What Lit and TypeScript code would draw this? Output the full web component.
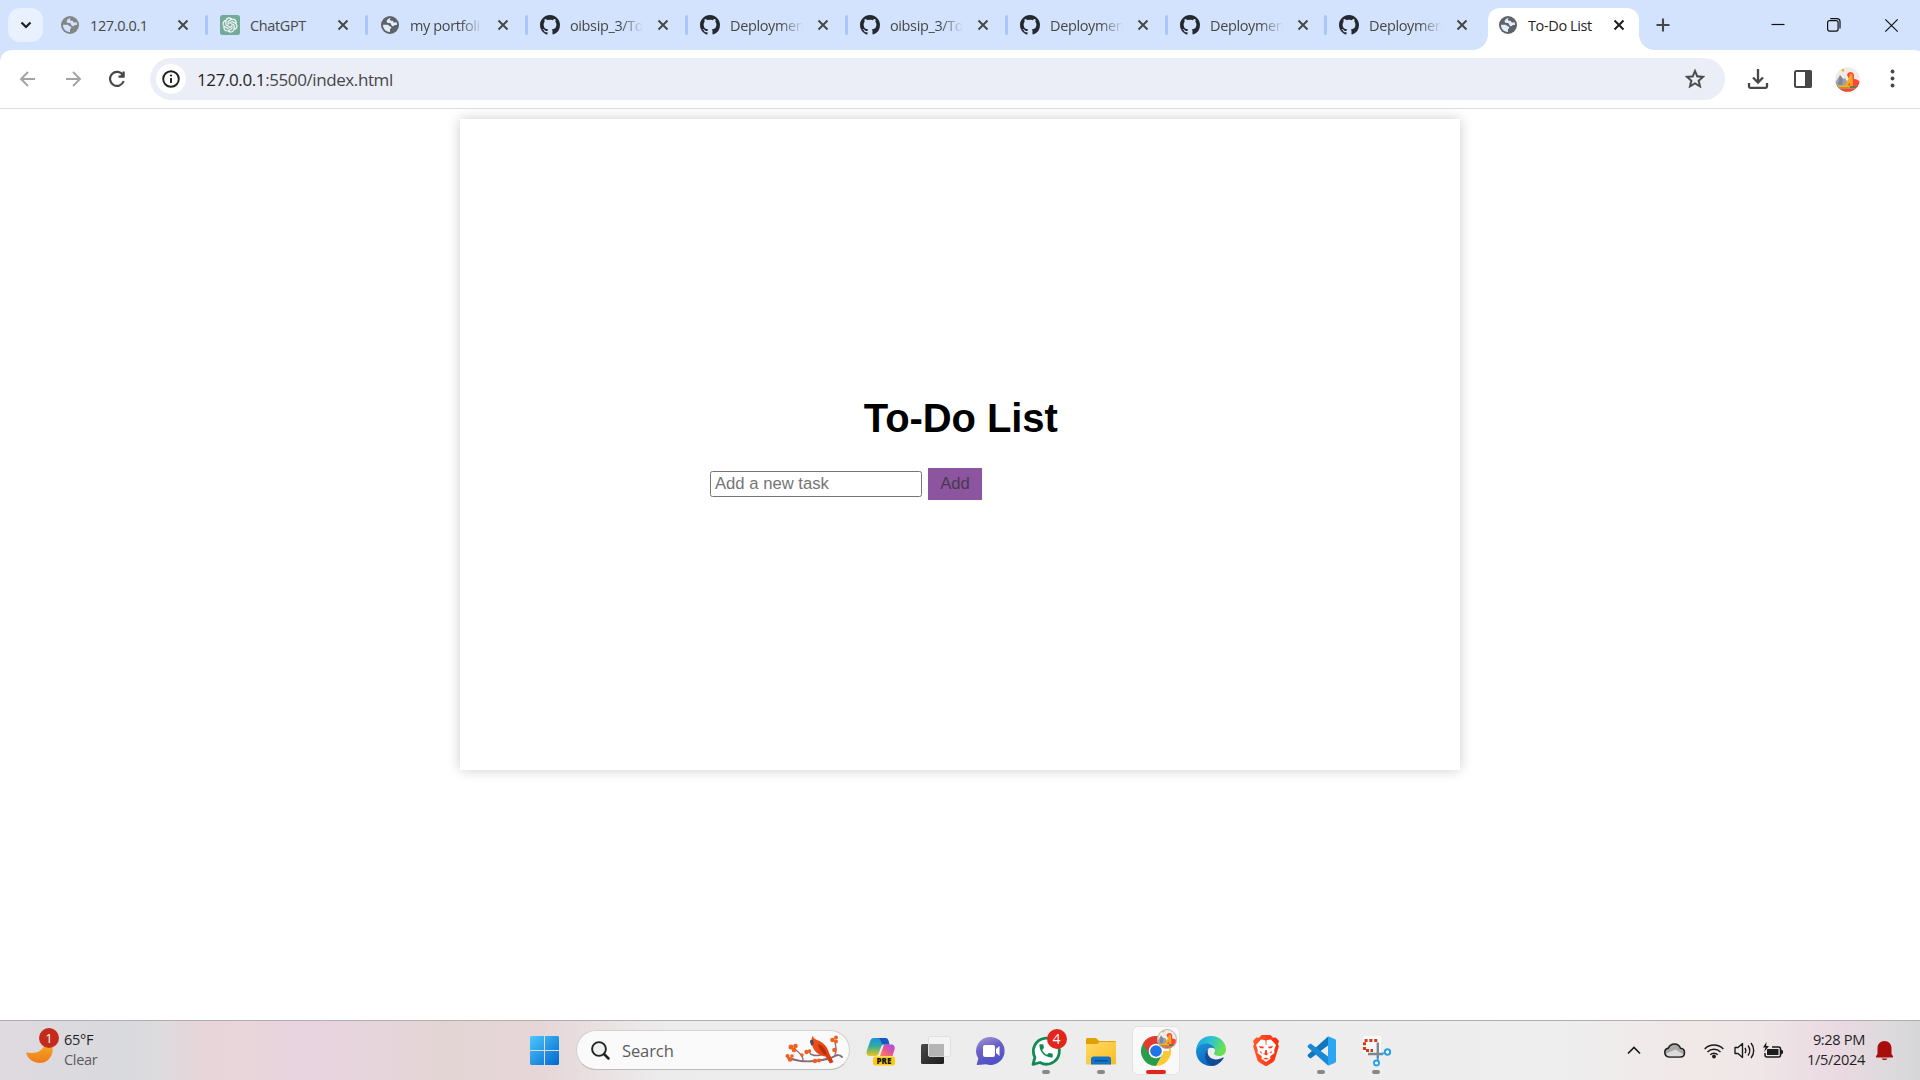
import { LitElement, html, svg, css } from "lit";
import { customElement } from "lit/decorators.js";
import { classMap } from "lit/directives/class-map.js";

type Fav = "globe" | "gpt" | "github";
interface Tab { title: string; icon: Fav; active?: boolean; dim?: boolean; narrow?: boolean }

const TABS: Tab[] = [
  { title: "127.0.0.1", icon: "globe", dim: true },
  { title: "ChatGPT", icon: "gpt" },
  { title: "my portfoli", icon: "globe" },
  { title: "oibsip_3/To", icon: "github" },
  { title: "Deploymen", icon: "github" },
  { title: "oibsip_3/To", icon: "github" },
  { title: "Deploymen", icon: "github" },
  { title: "Deploymen", icon: "github", narrow: true },
  { title: "Deploymen", icon: "github" },
  { title: "To-Do List", icon: "globe", active: true },
];

const GITHUB = "M8 0C3.58 0 0 3.58 0 8c0 3.54 2.29 6.53 5.47 7.59.4.07.55-.17.55-.38 0-.19-.01-.82-.01-1.49-2.01.37-2.53-.49-2.69-.94-.09-.23-.48-.94-.82-1.13-.28-.15-.68-.52-.01-.53.63-.01 1.08.58 1.23.82.72 1.21 1.87.87 2.33.66.07-.52.28-.87.51-1.07-1.78-.2-3.64-.89-3.64-3.95 0-.87.31-1.59.82-2.15-.08-.2-.36-1.02.08-2.12 0 0 .67-.21 2.2.82.64-.18 1.32-.27 2-.27.68 0 1.36.09 2 .27 1.53-1.04 2.2-.82 2.2-.82.44 1.1.16 1.92.08 2.12.51.56.82 1.27.82 2.15 0 3.07-1.87 3.75-3.65 3.95.29.25.54.73.54 1.48 0 1.07-.01 1.93-.01 2.2 0 .21.15.46.55.38A8.013 8.013 0 0016 8c0-4.42-3.58-8-8-8z";
const KNOT = "M22.2819 9.8211a5.9847 5.9847 0 0 0-.5157-4.9108 6.0462 6.0462 0 0 0-6.5098-2.9A6.0651 6.0651 0 0 0 4.9807 4.1818a5.9847 5.9847 0 0 0-3.9977 2.9 6.0462 6.0462 0 0 0 .7427 7.0966 5.98 5.98 0 0 0 .511 4.9107 6.051 6.051 0 0 0 6.5146 2.9001A5.9847 5.9847 0 0 0 13.2599 24a6.0557 6.0557 0 0 0 5.7718-4.2058 5.9894 5.9894 0 0 0 3.9977-2.9001 6.0557 6.0557 0 0 0-.7475-7.0729zm-9.022 12.6081a4.4755 4.4755 0 0 1-2.8764-1.0408l.1419-.0804 4.7783-2.7582a.7948.7948 0 0 0 .3927-.6813v-6.7369l2.02 1.1686a.071.071 0 0 1 .038.052v5.5826a4.504 4.504 0 0 1-4.4945 4.4944zm-9.6607-4.1254a4.4708 4.4708 0 0 1-.5346-3.0137l.142.0852 4.783 2.7582a.7712.7712 0 0 0 .7806 0l5.8428-3.3685v2.3324a.0804.0804 0 0 1-.0332.0615L9.74 19.9502a4.4992 4.4992 0 0 1-6.1408-1.6464zM2.3408 7.8956a4.485 4.485 0 0 1 2.3655-1.9728V11.6a.7664.7664 0 0 0 .3879.6765l5.8144 3.3543-2.0201 1.1685a.0757.0757 0 0 1-.071 0l-4.8303-2.7865A4.504 4.504 0 0 1 2.3408 7.872zm16.5963 3.8558L13.1038 8.364 15.1192 7.2a.0757.0757 0 0 1 .071 0l4.8303 2.7913a4.4944 4.4944 0 0 1-.6765 8.1042v-5.6772a.79.79 0 0 0-.407-.667zm2.0107-3.0231l-.142-.0852-4.7735-2.7818a.7759.7759 0 0 0-.7854 0L9.409 9.2297V6.8974a.0662.0662 0 0 1 .0284-.0615l4.8303-2.7866a4.4992 4.4992 0 0 1 6.6802 4.66zM8.3065 12.863l-2.02-1.1638a.0804.0804 0 0 1-.038-.0567V6.0742a4.4992 4.4992 0 0 1 7.3757-3.4537l-.142.0805L8.704 5.459a.7948.7948 0 0 0-.3927.6813zm1.0976-2.3654l2.602-1.4998 2.6069 1.4998v2.9994l-2.5974 1.4997-2.6067-1.4997Z";
const PHONE = "M6.62 10.79c1.44 2.83 3.76 5.14 6.59 6.59l2.2-2.2c.27-.27.67-.36 1.02-.24 1.12.37 2.33.57 3.57.57.55 0 1 .45 1 1V20c0 .55-.45 1-1 1-9.39 0-17-7.61-17-17 0-.55.45-1 1-1h3.5c.55 0 1 .45 1 1 0 1.25.2 2.45.57 3.57.11.35.03.74-.25 1.02l-2.2 2.2z";

/* Small round profile picture: grey hills, red mantle, yellow figure. */
const avatarArt = svg`
  <clipPath id="av"><circle cx="12.5" cy="12.5" r="12.3"/></clipPath>
  <g clip-path="url(#av)">
    <rect width="25" height="25" fill="#eeece4"/>
    <circle cx="8" cy="3.2" r="1.2" fill="#f5a623"/>
    <path d="M0 16l5-8 3 4 2-1 3 5v4H0z" fill="#9aa0ae"/>
    <path d="M5 8l3 4-1 6H3z" fill="#7f8696"/>
    <path d="M12 8c1-4 6-4 7 0l0 4c3 0 5 1 6 4v4H11l3-8z" fill="#ff4538"/>
    <path d="M15 7c2-1 3 1 2.500 4L18 19h-2.500l-1-3.500L12.500 19H9.500l2-4 2-3z" fill="#f9a825"/>
    <path d="M0 19h25v2.500H0z" fill="#6f7a3a"/>
    <path d="M3 18.500h12v2H3z" fill="#f6b21b"/>
    <path d="M2 21.500h21L18 25H7z" fill="#ec4a3c"/>
  </g>`;

const favicon = (kind: Fav, dim = false) => {
  if (kind === "github")
    return html`<svg class="fav" viewBox="0 0 16 16"><path fill="#24292f" d=${GITHUB}></path></svg>`;
  if (kind === "gpt")
    return html`<svg class="fav" viewBox="0 0 40 40"><rect width="40" height="40" rx="5" fill="#74aa9c"/>
      <g transform="translate(5 5) scale(1.25)"><path fill="#fff" stroke="#fff" stroke-width=".4" d=${KNOT}></path></g></svg>`;
  return html`<svg class="fav" viewBox="0 0 20 20"><circle cx="10" cy="10" r="9" fill=${dim ? "#858585" : "#5f6368"}/>
    <g fill=${dim ? "#d3e3fd" : "#e3ecfb"}>
      <path d="M3 9.800h4.300c1.600 0 1.300 1.300 3 1.600 1.500.3 1.500 2.300-.3 2.600v2.900C6 17.100 2.900 14 3 9.800z"/>
      <path d="M11 3.100C9 3.300 6.800 4.600 6.600 6.200c-.1 1.500 1.600 1.600 3 1.800 2 .3 1.300 3.100 3.400 3.300 1.200.1 1-1.300 2-1.300h2c.1-1-.1-1.900-.4-2.700-1.100-.3-1.800.6-2.800.1-.9-.5-.3-1.400-1.500-1.700-1.300-.3-2-.1-2.400-.8-.300-.700.300-1.200 1.100-1.800z"/>
    </g></svg>`;
};

const cross = html`<svg class="x" viewBox="0 0 12 12"><path d="M1.500 1.500l9 9M10.500 1.500l-9 9" stroke="currentColor" stroke-width="2" fill="none"/></svg>`;

const copilot = svg`
  <defs>
    <linearGradient id="cp1" x1="0" y1="0" x2="0" y2="1"><stop offset="0" stop-color="#1a8fe8"/><stop offset=".45" stop-color="#2fae9b"/><stop offset="1" stop-color="#f0c419"/></linearGradient>
    <linearGradient id="cp2" x1="1" y1="0" x2="0" y2="1"><stop offset="0" stop-color="#a24cf0"/><stop offset=".5" stop-color="#e3559b"/><stop offset="1" stop-color="#ff8a4a"/></linearGradient>
  </defs>
  <path d="M8 2h11c2 0 3 1 3.500 3l1 3.500h-5c-2 0-3 1-3.600 3l-2 5.500c-.6 2-1.500 3-3.500 3H4c-2.500 0-4-2-3.300-5L4 5.500C4.700 3 6 2 8 2z" fill="url(#cp1)"/>
  <path d="M12 2h7c2 0 3 1 3.500 3l1 3.500h-5c-2 0-3-1-3.700-3C14.300 3.500 13.500 2 12 2z" fill="#1757c4"/>
  <path d="M19 8.500h6c3 0 4.300 2 3.500 5l-2 6.500H14L17 11.500c.4-2 1-3 2-3z" fill="url(#cp2)"/>
  <rect x="7" y="20.500" width="22" height="9" rx="2" fill="#ffcb0c"/>
  <text x="18" y="27.900" text-anchor="middle" font-family="Open Sans, sans-serif" font-size="8" font-weight="800" fill="#111">PRE</text>`;

const taskview = svg`
  <defs><linearGradient id="tv" x1="0" y1="0" x2="1" y2="1"><stop stop-color="#4a4a4a"/><stop offset="1" stop-color="#1d1d1d"/></linearGradient></defs>
  <rect x="0" y="8" width="23" height="20" rx="1.500" fill="url(#tv)"/>
  <rect x="7.500" y=".5" width="22" height="20" rx="1.500" fill="#f4f4f4" fill-opacity=".85" stroke="#e0e0e0"/>
  <path d="M8 8h15v12.500H8z" fill="#a9a9a9" opacity=".75"/>`;

const chat = svg`
  <defs><linearGradient id="ch" x1="0" y1="0" x2=".4" y2="1"><stop stop-color="#a59ad4"/><stop offset=".5" stop-color="#6a5fc4"/><stop offset="1" stop-color="#4f52c8"/></linearGradient></defs>
  <path d="M15 1a14 14 0 1 1-5 27.200L1.500 29c-.7 0-.9-.5-.7-1l1.500-5.500A14 14 0 0 1 15 1z" fill="url(#ch)"/>
  <rect x="7" y="9" width="12" height="12" rx="2" fill="#fff"/><path d="M20 13l3.500-3v10L20 17z" fill="#fff"/>`;

const whatsapp = svg`
  <path d="M2 28.300l1.900-7A13 13 0 1 1 9 26.500z" fill="#fff" stroke="#138a56" stroke-width="2.800" stroke-linejoin="round"/>
  <g transform="translate(6.200 6) scale(.74)"><path fill="#138a56" d=${PHONE}></path></g>`;

const folder = svg`
  <defs><linearGradient id="fo" x1="0" y1="0" x2="1" y2="1"><stop stop-color="#ffd968"/><stop offset="1" stop-color="#fbbd20"/></linearGradient></defs>
  <path d="M0 3.500C0 2.500.700 2 1.500 2H9c1 0 1.500.3 2 .9L13 5H28.500c.9 0 1.500.6 1.500 1.500V10H0z" fill="#dfa000"/>
  <path d="M0 8h10.500c.8 0 1.300-.3 1.800-.8L13.500 6H30v21.500c0 .800-.500 1-1 1H1c-.700 0-1-.400-1-1z" fill="url(#fo)"/>
  <path d="M5 28.500V23c0-1.500 1-2.500 2.500-2.500h15c1.500 0 2.500 1 2.500 2.500v5.500z" fill="#1273c8"/>
  <path d="M8.500 24.700h13" stroke="#0a4f96" stroke-width="1.300"/>`;

const chrome = svg`
  <path d="M15 15L2 7.500A15 15 0 0 1 28 7.500z" fill="#e33b2e"/>
  <path d="M15 15L2 7.500A15 15 0 0 0 15 30l6.500-11.300z" fill="#2a9d4c"/>
  <path d="M15 15H28V7.500A15 15 0 0 1 15 30l6.500-11.300z" fill="#fcc934"/>
  <path d="M15 8H28a15 15 0 0 0-26-.5l6.500 11z" fill="#e33b2e"/>
  <circle cx="15" cy="15" r="7.300" fill="#fff"/><circle cx="15" cy="15" r="5.800" fill="#1f74e8"/>`;

const edge = svg`
  <defs>
    <linearGradient id="e1" x1="0" y1="0" x2="1" y2=".4"><stop stop-color="#1b9de2"/><stop offset=".5" stop-color="#2cc3d2"/><stop offset="1" stop-color="#6be04f"/></linearGradient>
    <linearGradient id="e2" x1="0" y1="0" x2=".6" y2="1"><stop stop-color="#1b96e0"/><stop offset="1" stop-color="#0c62b8"/></linearGradient>
  </defs>
  <path d="M0 14C1 5.500 7 0 15 0c8.500 0 15 6 15 13.500 0 4-3 6.500-6.800 6.500-3.200 0-5.200-1.200-5.200-2.300 0-.9 1-1.200 1-3.400C19 11 15.500 8 10.500 8 6 8 1.500 10.500 0 14z" fill="url(#e1)"/>
  <path d="M0 15c.5-4.500 5-7.500 10-7.500 4.500 0 8 2.300 8.800 5.500-1.400-1.300-3-1.600-4.600-1.200-3 .8-4.400 4-3.700 7.600 1 5.300 5 9 10 9.300C18.700 29.500 17 30 15 30 6.500 30 0 23.500 0 15z" fill="url(#e2)"/>
  <path d="M12.300 13c-2 4.500.7 9.300 6 10.300 3.300.6 6.500-.5 8.600-1.700.6-.3 1 .2.700.7C24.500 27.500 20 29.800 16.500 29.700 12 28.500 9.500 25 9.300 20.500 9.200 17 10.300 14.300 12.300 13z" fill="#114c94"/>`;

const brave = svg`
  <defs><linearGradient id="br"><stop stop-color="#ff5a2a"/><stop offset="1" stop-color="#fb2a10"/></linearGradient></defs>
  <path d="M8.500 0h9l2.500 2.800 2.800-.4L26 6l-1 3 .8 2.500-4 13c-.5 1.400-1 2-2 2.700l-5.600 3.600c-.8.500-1.600.5-2.400 0l-5.600-3.600c-1-.7-1.500-1.300-2-2.700l-4-13L1 9 0 6l3.200-3.600 2.800.4z" fill="url(#br)"/>
  <path d="M8 4.500l5 .8 5-.8 5 5.500-1.800 5 .3 3-4 3-.5 1.500.8 1-4.800 3.500-4.800-3.500.8-1-.5-1.500-4-3 .3-3L3 10z" fill="#fff"/>
  <path d="M6 11l5 .8-.8 1.800-3.200-.6zM20 11l-5 .8.800 1.800 3.200-.6zM12.200 15h1.600l.5 3.500h-2.600zM10 18.500h6l-3 1.900zM7.500 15.500l1.800 3-2-.5zM18.500 15.500l-1.800 3 2-.5zM10 24l3-1.500 3 1.500-3 .6zM12.400 5h1.200l-.3 5h-.6z" fill="#fb3f1d"/>`;

const vscode = svg`
  <path d="M22 .5L2 18.500c-.6.600-.6 1.300 0 1.900l1.700 1.500c.5.400 1.100.4 1.600.1L22 9.500z" fill="#1077bf"/>
  <path d="M22 29.500L2 11.500c-.6-.6-.6-1.300 0-1.900l1.700-1.500c.5-.4 1.100-.4 1.600-.1L22 20.500z" fill="#1a89d6"/>
  <path d="M22 .2L28.700 3c.8.400 1.300 1 1.300 1.900v20.200c0 .9-.5 1.500-1.300 1.900L22 29.800z" fill="#2aa6f2"/>`;

const snip = svg`
  <rect x="1" y="0" width="18" height="17" fill="#f8f8f8"/>
  <path d="M2.500 14V4.500h13" fill="none" stroke="#d03b16" stroke-width="3" stroke-dasharray="3 1.800"/>
  <path d="M4 14.500h7" stroke="#d03b16" stroke-width="3" stroke-dasharray="3 1.500"/>
  <path d="M15.800 6.500V22M6 18h15" stroke="#7d8791" stroke-width="2.400" fill="none"/>
  <circle cx="25.500" cy="16" r="2.700" fill="#fff" stroke="#23a0ea" stroke-width="1.900"/>
  <circle cx="14.500" cy="27" r="2.500" fill="#fff" stroke="#23a0ea" stroke-width="1.900"/>
  <path d="M15.500 24.500l.5-3.500M19 18l4-1" stroke="#23a0ea" stroke-width="1.800"/>`;

const bird = svg`
  <defs><linearGradient id="bd" x1="0" y1="0" x2="1" y2="1"><stop stop-color="#f4561c"/><stop offset=".6" stop-color="#e2420f"/><stop offset="1" stop-color="#c93a12"/></linearGradient></defs>
  <g fill="none" stroke="#8a6a78" stroke-linecap="round">
    <path d="M3 23c9 3 18 4 26 3s14-1 19-4 7-2 9 0" stroke-width="1.900"/>
    <path d="M36 25l10-2 6-3M18 25c0-5-3-6-8-11M24 17c2 4 6 4 12 3M50 20c2-5 1-9 0-12" stroke-width="1.300"/>
  </g>
  <path d="M28 .5c0 2 1 3 4 4.500 6 2 10 6 12 13l4.500 9-3.500 1.500-4.500-7c-7-1-12.500-6-13.500-12-.8-4-1-6.500 1-9z" fill="url(#bd)"/>
  <path d="M33 9c5 2 8 6 9 11-5-1-8-6-9-11z" fill="#b92d0a"/>
  <path d="M25 5.500l3-1 .8 4-1.800 2.500c-1.600-1.700-2-3.500-2-5.500z" fill="#4d4a5e"/>
  <g fill="#f0601f"><circle cx="6" cy="12" r="2.500"/><circle cx="10.500" cy="11" r="2.300"/><circle cx="9" cy="15" r="2.300"/>
  <circle cx="2.500" cy="21" r="2"/><circle cx="5" cy="24.500" r="2.300"/><circle cx="7" cy="21" r="1.800"/>
  <circle cx="21.500" cy="17" r="2.200"/><circle cx="24.500" cy="16" r="1.800"/><circle cx="17" cy="20" r="1.700"/>
  <circle cx="47.500" cy="5" r="2.300"/><circle cx="51" cy="2.500" r="2"/><circle cx="51" cy="6.500" r="2"/><circle cx="49.500" cy="15" r="2.300"/>
  <circle cx="30" cy="26" r="2.200"/><circle cx="34" cy="25.500" r="2"/></g>`;

interface App { art: unknown; w: number; h: number; run?: boolean; active?: boolean; badge?: string }
const APPS: App[] = [
  { art: copilot, w: 30, h: 30 },
  { art: taskview, w: 30, h: 30 },
  { art: chat, w: 30, h: 30 },
  { art: whatsapp, w: 30, h: 30, run: true, badge: "4" },
  { art: folder, w: 30, h: 30, run: true },
  { art: chrome, w: 30, h: 30, active: true },
  { art: edge, w: 30, h: 30 },
  { art: brave, w: 26, h: 31 },
  { art: vscode, w: 30, h: 30, run: true },
  { art: snip, w: 28, h: 30, run: true },
];

@customElement("app-root")
export class AppRoot extends LitElement {
  static styles = css`
    :host { display: flex; flex-direction: column; width: 1920px; height: 1080px; overflow: hidden;
      background: #fff; font-family: "Open Sans", "Noto Sans", sans-serif; color: #1f1f1f; }
    * { box-sizing: border-box; }
    svg { display: block; flex: none; overflow: visible; }

    .strip { height: 50px; flex: none; background: #d3e3fd; display: flex; align-items: stretch; }
    .searchtabs { width: 35px; height: 34px; margin: 8px 4px 0 8px; border-radius: 12px; background: #e9f0fe;
      display: flex; align-items: center; justify-content: center; flex: none; }
    .tab { position: relative; width: 160px; flex: none; display: flex; align-items: center; padding-left: 13px; }
    .tab.narrow { width: 159px; }
    .tab.active { width: 155px; color: #1f1f1f; padding-left: 13px; margin-right: 16px; }
    .tab.active .card { position: absolute; left: 3px; top: 8px; right: 1.500px; bottom: 0; background: #fff; border-radius: 12px 12px 0 0; }
    .card::before, .card::after { content: ""; position: absolute; bottom: 0; width: 15px; height: 15px; }
    .card::before { left: -15px; background: radial-gradient(circle at 0 0, transparent 14.500px, #fff 15px); }
    .card::after { right: -15px; background: radial-gradient(circle at 100% 0, transparent 14.500px, #fff 15px); }
    .sep { position: absolute; right: -1px; top: 15px; width: 3px; height: 20px; border-radius: 2px; background: #a8c7fa; }
    .fav { width: 20px; height: 20px; position: relative; }
    .label { position: relative; margin-left: 10px; padding-top: 1px; width: 73px; white-space: nowrap; font-size: 14.500px; line-height: 20px;
      letter-spacing: -.38px; color: #474747; font-weight: 400; }
    .label.fade { -webkit-mask-image: linear-gradient(90deg, #000 50px, transparent 73px); }
    .active .label { color: #1f1f1f; }
    .x { width: 12px; height: 12px; margin-left: 13.500px; color: #474747; position: relative; }
    .active .x { margin-left: 12px; color: #1f1f1f; }
    .winbtns { margin-left: auto; display: flex; align-items: center; gap: 42px; padding-right: 22px; }
    .winbtns svg:last-child { margin-left: 2px; }

    .toolbar { height: 59px; flex: none; background: #d3e3fd; display: flex; }
    .toolrow { flex: 1; background: #fff; border-radius: 12px 12px 0 0; border-bottom: 1px solid #dcdde0; display: flex; align-items: center; padding-left: 16px; }
    .nav { display: flex; gap: 20.500px; width: 134px; }
    .omni { width: 1575px; height: 42px; border-radius: 21px; background: #ebeef7; display: flex; align-items: center; padding: 0 18px 0 6px; }
    .info { width: 30px; height: 30px; border-radius: 50%; background: #fff; display: flex; align-items: center; justify-content: center; }
    .url { margin-left: 11px; font-size: 17px; letter-spacing: -.4px; color: #474747; flex: 1; white-space: pre; }
    .url b { font-weight: 400; color: #1f1f1f; }
    .tools { display: flex; align-items: center; margin-left: 22.500px; }

    .page { flex: 1; padding-top: 10px; display: flex; justify-content: center; align-items: flex-start; background: #fff; overflow: hidden; }
    .box { width: 1000px; height: 651px; background: #fff; box-shadow: 0 0 12.500px rgba(0,0,0,.2); display: flex; flex-direction: column; align-items: center;
      font-family: "Liberation Sans", Arial, sans-serif; }
    h1 { margin: 276px 0 0; font-size: 40px; line-height: 46px; font-weight: 700; color: #000; padding-left: 1.500px; letter-spacing: -.1px; }
    .form { display: flex; align-items: center; width: 500px; margin-top: 27px; gap: 6px; }
    .field { width: 212px; height: 26px; border: 1px solid #767676; border-radius: 2.500px; padding: 0 4px; font-size: 16.667px; line-height: 23px; color: #757575; background: #fff; }
    .add { width: 54px; height: 32px; background: #8d55a0; color: #463a4d; font-size: 16.667px; line-height: 31px; text-align: center; }

    .taskbar { height: 60px; flex: none; border-top: 1px solid #b0aeb0; display: flex; align-items: stretch;
      background: linear-gradient(90deg, #dfdadf 0, #d9dade 120px, #dcdbde 155px, #e8d5da 205px, #e8d6da 250px, #e8d3e0 300px, #e6d5db 380px, #e4d5d5 440px, #e6d6d8 540px, #ececec 660px, #eee 1560px, #f1e8e8 1690px, #efe6e7 1760px, #ead9e2 1840px, #dcdadc 1890px, #d6d6d8 1920px); }
    .weather { width: 517px; display: flex; padding-left: 26px; }
    .moonwrap { position: relative; width: 38px; }
    .moonwrap svg { margin-top: 19px; }
    .badge { position: absolute; width: 20px; height: 20px; border-radius: 50%; background: #c42b1c; color: #fff; font-size: 13px; line-height: 20px; text-align: center; }
    .moonwrap .badge { left: 13px; top: 6.500px; }
    .two { display: flex; flex-direction: column; padding-top: 8px; font-size: 14.600px; line-height: 20px; letter-spacing: -.35px; white-space: nowrap; }
    .two span + span { color: #5c5c60; }
    .start { width: 55px; display: flex; align-items: center; justify-content: center; }
    .search { width: 274px; height: 40px; margin: 9px 3px 0 4px; border-radius: 20px; background: #fbfafb; border: 1px solid #d2d0d2; border-bottom-color: #bbb;
      display: flex; align-items: center; padding-left: 14px; }
    .search span { margin-left: 12px; font-size: 16.500px; letter-spacing: -.1px; color: #5c5c5c; width: 163px; }
    .app { position: relative; width: 55px; display: flex; align-items: center; justify-content: center; }
    .tile { position: absolute; left: 3.500px; top: 5px; width: 48px; height: 49px; border-radius: 6px; background: #f9f9f9; border: 1px solid #e3e3e3; }
    .app > svg { position: relative; }
    .pip { position: absolute; bottom: 6px; left: 23.500px; width: 8px; height: 4px; border-radius: 2px; background: #888; }
    .pip.wide { width: 20px; left: 17.500px; background: #e3261c; }
    .app .badge { left: 28.500px; top: 8px; background: #e3261c; font-size: 14px; }
    .app .mini { position: absolute; left: 29px; top: 8px; width: 20px; height: 20px; }
    .tray { margin-left: auto; display: flex; align-items: center; }
    .clock { width: 63px; align-items: flex-end; color: #1f1f1f; height: 60px; }
    .clock span + span { color: #1f1f1f; }
  `;

  private tab(t: Tab, i: number) {
    const fade = t.title.startsWith("my") || t.icon === "github";
    const last = i >= TABS.length - 2;
    return html`<div class=${classMap({ tab: true, active: !!t.active, narrow: !!t.narrow || (last && !t.active) })}>
      ${t.active ? html`<div class="card"></div>` : ""}
      ${favicon(t.icon, t.dim)}
      <span class=${classMap({ label: true, fade })}>${t.title}</span>
      ${cross}
      ${last ? "" : html`<div class="sep"></div>`}
    </div>`;
  }

  render() {
    return html`
      <div class="strip">
        <div class="searchtabs"><svg width="12" height="8" viewBox="0 0 12 8"><path d="M1.500 1.500L6 6l4.500-4.500" fill="none" stroke="#1f1f1f" stroke-width="2.200"/></svg></div>
        ${TABS.map((t, i) => this.tab(t, i))}
        <svg width="14" height="50" viewBox="0 0 14 50"><path d="M7 18.500v13M.5 25h13" stroke="#474747" stroke-width="2.100"/></svg>
        <div class="winbtns">
          <svg width="14" height="14" viewBox="0 0 14 14"><path d="M.5 6.500h13" stroke="#111" stroke-width="1.200"/></svg>
          <svg width="14" height="14" viewBox="0 0 14 14"><rect x=".6" y="2.600" width="10.500" height="10.500" rx="2" fill="none" stroke="#111" stroke-width="1.200"/><path d="M3.200.6h6.800a3 3 0 0 1 3 3v6.800" fill="none" stroke="#111" stroke-width="1.200"/></svg>
          <svg width="13" height="13" viewBox="0 0 13 13"><path d="M.3.300l12.400 12.400M12.700.300L.3 12.700" stroke="#111" stroke-width="1.200"/></svg>
        </div>
      </div>

      <div class="toolbar"><div class="toolrow">
        <div class="nav">
          <svg width="24" height="24" viewBox="0 0 24 24"><path d="M19 12H5.500M12 5l-7 7 7 7" fill="none" stroke="#a3a3a3" stroke-width="1.900"/></svg>
          <svg width="24" height="24" viewBox="0 0 24 24"><path d="M5 12h13.500M12 5l7 7-7 7" fill="none" stroke="#a3a3a3" stroke-width="1.900"/></svg>
          <svg width="24" height="24" viewBox="0 0 24 24"><path d="M18 8.200A7 7 0 1 0 18.700 14" fill="none" stroke="#474747" stroke-width="2.100"/><path d="M19.500 4.500v6h-6z" fill="#474747"/><path d="M18.500 4.500v5h-5" fill="none" stroke="#474747" stroke-width="2"/></svg>
        </div>
        <div class="omni">
          <div class="info"><svg width="18" height="18" viewBox="0 0 18 18"><circle cx="9" cy="9" r="7.800" fill="none" stroke="#1f1f1f" stroke-width="1.900"/><path d="M9 8v5" stroke="#1f1f1f" stroke-width="1.900"/><circle cx="9" cy="5.500" r="1.100" fill="#1f1f1f"/></svg></div>
          <span class="url"><b>127.0.0.1</b>:5500/index.html</span>
          <svg width="24" height="24" viewBox="0 0 24 24"><path fill="#474747" stroke="#474747" stroke-width=".4" d="M22 9.240l-7.190-.62L12 2 9.190 8.630 2 9.240l5.460 4.730L5.820 21 12 17.270 18.180 21l-1.630-7.030L22 9.240zM12 15.400l-3.760 2.270 1-4.280-3.320-2.880 4.380-.38L12 6.100l1.710 4.040 4.380.38-3.320 2.880 1 4.280L12 15.400z"/></svg>
        </div>
        <div class="tools">
          <svg width="20" height="20" viewBox="0 0 20 20"><path d="M10 0v13M5 8.500l5 5 5-5" fill="none" stroke="#474747" stroke-width="2.300"/><path d="M1 14v3.500c0 .8.500 1.300 1.300 1.300h15.400c.8 0 1.300-.5 1.300-1.300V14" fill="none" stroke="#474747" stroke-width="2.300"/></svg>
          <svg width="67.500" height="18" viewBox="0 0 67.500 18"><rect x="27" y="1" width="16" height="16" rx="1.500" fill="#fff" stroke="#474747" stroke-width="2"/><path d="M37 0h5a2 2 0 0 1 2 2v14a2 2 0 0 1-2 2h-5z" fill="#474747"/></svg>
          <svg width="25" height="25" viewBox="0 0 25 25">${avatarArt}</svg>
          <svg width="66" height="20" viewBox="0 0 66 20"><g fill="#474747"><circle cx="32.500" cy="2.500" r="1.900"/><circle cx="32.500" cy="9.500" r="1.900"/><circle cx="32.500" cy="16.500" r="1.900"/></g></svg>
        </div>
      </div></div>

      <div class="page"><div class="box">
        <h1>To-Do List</h1>
        <div class="form"><div class="field">Add a new task</div><div class="add">Add</div></div>
      </div></div>

      <div class="taskbar">
        <div class="weather">
          <div class="moonwrap">
            <svg width="28" height="24" viewBox="0 0 28 24"><defs><linearGradient id="mo" x1="0" y1="0" x2="0" y2="1"><stop stop-color="#f5b52a"/><stop offset="1" stop-color="#ee7a1a"/></linearGradient></defs>
            <path d="M24 0c6 9 2 23-10.500 23C8 23 2.500 20 .3 13.600c-.2-.8.300-1.200 1-1C11 14.500 19 10 20 0z" fill="url(#mo)"/></svg>
            <div class="badge">1</div>
          </div>
          <div class="two"><span>65°F</span><span>Clear</span></div>
        </div>
        <div class="start"><svg width="29" height="29" viewBox="0 0 29 29"><defs><linearGradient id="wn" gradientUnits="userSpaceOnUse" x1="0" y1="0" x2="29" y2="29"><stop stop-color="#4cc8fb"/><stop offset="1" stop-color="#0067cf"/></linearGradient></defs>
          <path fill="url(#wn)" d="M1.500 0H14v14H0V1.500C0 .7.700 0 1.500 0zM15 0h12.500c.8 0 1.500.7 1.500 1.500V14H15zM0 15h14v14H1.500C.7 29 0 28.300 0 27.500zM15 15h14v12.500c0 .8-.7 1.500-1.500 1.500H15z"/></svg></div>
        <div class="search">
          <svg width="19" height="19" viewBox="0 0 19 19"><circle cx="8" cy="8" r="6.900" fill="#eef0f2" stroke="#222" stroke-width="1.900"/><path d="M13 13l4.500 4.500" stroke="#222" stroke-width="2.500" stroke-linecap="round"/></svg>
          <span>Search</span>
          <svg width="58" height="30" viewBox="0 0 58 30">${bird}</svg>
        </div>
        ${APPS.map((a) => html`<div class="app">
          ${a.active ? html`<div class="tile"></div>` : ""}
          <svg width=${a.w} height=${a.h} viewBox="0 0 ${a.w} ${a.h}">${a.art}</svg>
          ${a.active ? html`<svg class="mini" viewBox="0 0 25 25">${avatarArt}<circle cx="12.500" cy="12.500" r="11.800" fill="none" stroke="#b9b3ae" stroke-width="1.200"/></svg><div class="pip wide"></div>` : ""}
          ${a.run ? html`<div class="pip"></div>` : ""}
          ${a.badge ? html`<div class="badge">${a.badge}</div>` : ""}
        </div>`)}
        <div class="tray">
          <svg width="14" height="9" viewBox="0 0 14 9"><path d="M1 7.500l6-6 6 6" fill="none" stroke="#1b1b1b" stroke-width="1.700"/></svg>
          <svg width="63" height="15" viewBox="0 0 63 15"><path d="M28 14a4.500 4.500 0 0 1-.6-8.900C28.500 2.300 31 1 33.500 1c3 0 5 1.600 6 4.200 2.700.2 4 2.200 4 4.300 0 2.700-1.900 4.500-4.400 4.500z" fill="#a9a9a9" stroke="#222" stroke-width="1.600"/><path d="M25.500 10.500l9-4 8 5c-.8 1.200-2 1.700-3.400 1.700H28c-.9 0-2-1-2.500-2.700z" fill="#dcdcdc"/></svg>
          <svg width="20" height="16" viewBox="0 0 20 16"><g fill="none" stroke="#1b1b1b" stroke-width="1.500"><path d="M.7 6a13 13 0 0 1 18.600 0M3.500 9a9.200 9.200 0 0 1 13 0M6.300 11.800a5.300 5.300 0 0 1 7.400 0"/></g><circle cx="10" cy="13.500" r="1.900" fill="#1b1b1b"/></svg>
          <svg width="36" height="17" viewBox="0 0 36 17"><g fill="none" stroke="#1b1b1b" stroke-width="1.400" stroke-linejoin="round"><path d="M11 5.500h3l4.500-4v14l-4.500-4h-3z"/><path d="M21 5.800c1 1.600 1 3.800 0 5.400M24 3.500c2.200 3 2.200 7 0 10M27 1c3.600 4.500 3.600 10.500 0 15"/></g></svg>
          <svg width="42" height="17" viewBox="0 0 42 17"><path d="M12 5h6.500a2 2 0 0 1 2 2v6a2 2 0 0 1-2 2H7a2 2 0 0 1-2-2V11" fill="none" stroke="#1b1b1b" stroke-width="1.500"/><rect x="7" y="7" width="11.500" height="6" rx=".6" fill="#1b1b1b"/><path d="M21.500 8c1.500 0 1.500 4 0 4z" fill="#1b1b1b" stroke="#1b1b1b"/><path d="M6.500 0L3 5.500h2.500L4 10l5-6H6.200z" fill="#1b1b1b"/></svg>
          <div class="two clock"><span>9:28 PM</span><span>1/5/2024</span></div>
          <svg width="55" height="20" viewBox="0 0 55 20"><path d="M19.500 0c4 0 7 3 7 7v6l1.500 2.200c.3.600 0 1.200-.7 1.200H11.700c-.7 0-1-.6-.7-1.200L12.500 13V7c0-4 3-7 7-7z" fill="#a80f0c"/><path d="M16.700 17.500h5.600c-.6 2-5 2-5.600 0z" fill="#a80f0c"/></svg>
        </div>
      </div>`;
  }
}
